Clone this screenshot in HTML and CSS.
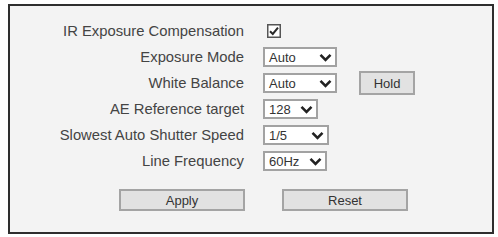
FILE: index.html
```html
<!DOCTYPE html>
<html>
<head>
    <meta charset="utf-8">
    <title>Exposure</title>
    <link rel="stylesheet" href="styles.css">
</head>
<body>
<div class="panel">
    <div class="row">
        <span class="lbl">IR Exposure Compensation</span>
        <span class="chk">
            <svg width="14" height="14" viewBox="0 0 14 14">
                <rect x="0.75" y="0.75" width="12.5" height="12.5" fill="#fff" stroke="#555" stroke-width="1.5"/>
                <path d="M3 7.2 L5.8 10 L11 3.6" fill="none" stroke="#2a2a2a" stroke-width="2"/>
            </svg>
        </span>
    </div>
    <div class="row">
        <span class="lbl">Exposure Mode</span>
        <div class="sel w74"><span>Auto</span><svg class="chev" width="13" height="9" viewBox="0 0 13 9"><path d="M1.5 1.8 L6.5 6.8 L11.5 1.8" fill="none" stroke="#222" stroke-width="2.6"/></svg></div>
    </div>
    <div class="row">
        <span class="lbl">White Balance</span>
        <div class="sel w74"><span>Auto</span><svg class="chev" width="13" height="9" viewBox="0 0 13 9"><path d="M1.5 1.8 L6.5 6.8 L11.5 1.8" fill="none" stroke="#222" stroke-width="2.6"/></svg></div>
        <button class="btn hold">Hold</button>
    </div>
    <div class="row">
        <span class="lbl">AE Reference target</span>
        <div class="sel w55"><span>128</span><svg class="chev" width="13" height="9" viewBox="0 0 13 9"><path d="M1.5 1.8 L6.5 6.8 L11.5 1.8" fill="none" stroke="#222" stroke-width="2.6"/></svg></div>
    </div>
    <div class="row">
        <span class="lbl">Slowest Auto Shutter Speed</span>
        <div class="sel w66"><span>1/5</span><svg class="chev" width="13" height="9" viewBox="0 0 13 9"><path d="M1.5 1.8 L6.5 6.8 L11.5 1.8" fill="none" stroke="#222" stroke-width="2.6"/></svg></div>
    </div>
    <div class="row">
        <span class="lbl">Line Frequency</span>
        <div class="sel w64"><span>60Hz</span><svg class="chev" width="13" height="9" viewBox="0 0 13 9"><path d="M1.5 1.8 L6.5 6.8 L11.5 1.8" fill="none" stroke="#222" stroke-width="2.6"/></svg></div>
    </div>
    <div class="actions">
        <button class="btn wide">Apply</button>
        <button class="btn wide">Reset</button>
    </div>
</div>
</body>
</html>
```

FILE: styles.css
```css
html,
body {
    margin: 0;
    padding: 0;
    background: #fff;
}

body {
    font-family: "Liberation Sans", Arial, sans-serif;
    color: #444;
}

.panel {
    margin: 4px 0 0 8px;
    width: 482px;
    height: 214px;
    border: 2px solid #2e2e2e;
    background: #f3f3f3;
    padding-top: 12px;
    box-sizing: content-box;
}

.row {
    display: flex;
    align-items: center;
    height: 26px;
}

.lbl {
    width: 234px;
    text-align: right;
    font-size: 14.8px;
    margin-right: 18px;
    white-space: nowrap;
}

.chk {
    display: flex;
    margin-left: 5px;
}

.sel {
    display: flex;
    align-items: center;
    justify-content: space-between;
    height: 20px;
    box-sizing: border-box;
    border: 2px solid #a2a2a2;
    background: #fff;
    padding: 0 3px 0 4px;
    font-size: 13px;
    color: #333;
    margin-left: 1px;
}

.w74 { width: 74px; }
.w55 { width: 55px; }
.w66 { width: 66px; }
.w64 { width: 64px; }

.btn {
    font-family: "Liberation Sans", Arial, sans-serif;
    font-size: 13px;
    color: #333;
    background: #e2e2e2;
    border: 2px solid #a4a4a4;
    padding: 0;
    box-sizing: border-box;
}

.hold {
    width: 56px;
    height: 24px;
    margin-left: 22px;
}

.actions {
    display: flex;
    gap: 37px;
    margin: 15px 0 0 109px;
}

.wide {
    width: 126px;
    height: 22px;
}
```
